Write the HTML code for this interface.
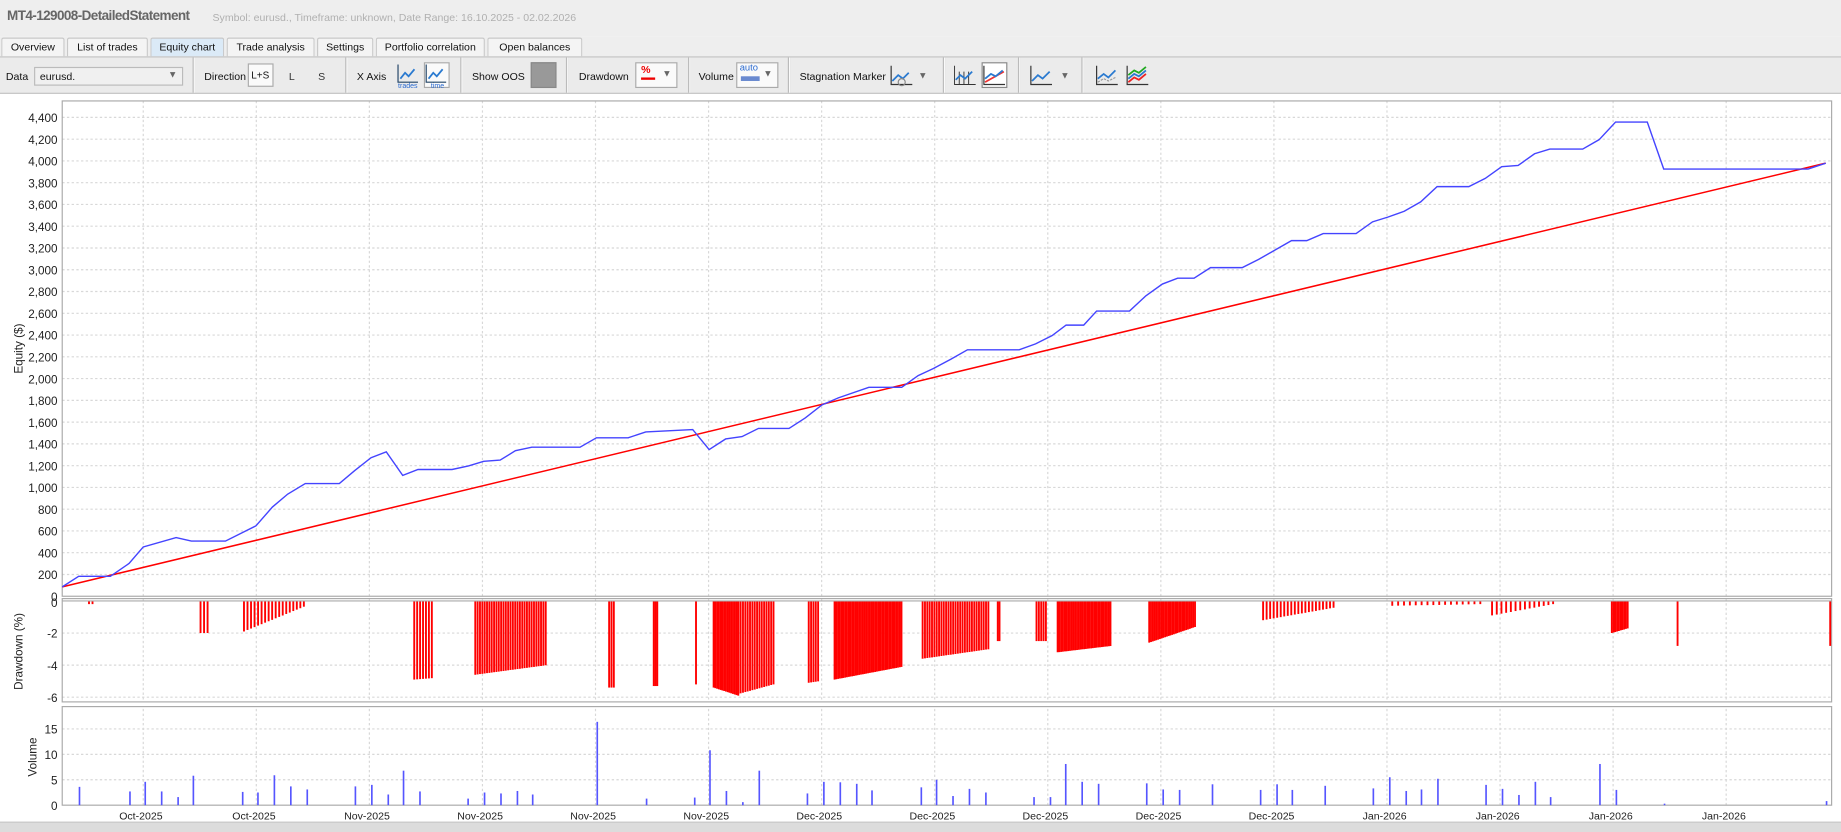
<!DOCTYPE html>
<html><head><meta charset="utf-8">
<style>
html,body{margin:0;padding:0;width:1841px;height:831px;overflow:hidden;background:#fff;font-family:"Liberation Sans",Arial,sans-serif;}
#w{position:absolute;left:0;top:0;width:1568px;height:708px;transform:scale(1.17411,1.17373);transform-origin:0 0;background:#fff;}
.title{position:absolute;left:0;top:0;width:1568px;height:31px;background:#eeeeee;}
.title b{position:absolute;left:6px;top:8px;font-size:11.5px;color:#666;font-weight:bold;letter-spacing:-0.5px}
.title span{position:absolute;left:181px;top:10px;font-size:9px;color:#b0b0b0}
.tabs{position:absolute;left:0;top:31px;width:1568px;height:18px;background:#eeeeee;}
.tab{position:absolute;top:1px;height:16px;border:1px solid #c8c8c8;border-bottom:none;background:#f4f4f4;font-size:9px;line-height:15px;text-align:center;color:#111;box-sizing:border-box;border-radius:2px 2px 0 0}
.tab.act{background:#dbeaf7;}
.tb{position:absolute;left:0;top:48px;width:1568px;height:32px;background:#ebebeb;border-top:1px solid #c4c4c4;border-bottom:1px solid #c4c4c4;box-sizing:border-box;font-size:9px;color:#111}
.tb .t{position:absolute;top:11px}
.sep{position:absolute;top:0;width:1px;height:30px;background:#bbb;border-right:1px solid #fafafa}
.ib{position:absolute;top:5px;height:20px;border:1px solid #aaa;background:#fafafa;box-sizing:border-box}
svg{position:absolute;left:0;top:0}
</style></head><body><div id="w">
<div class="title"><b>MT4-129008-DetailedStatement</b><span>Symbol: eurusd., Timeframe: unknown, Date Range: 16.10.2025 - 02.02.2026</span></div>
<div class="tabs">
<div class="tab" style="left:1px;width:54px">Overview</div>
<div class="tab" style="left:57px;width:69px">List of trades</div>
<div class="tab act" style="left:128px;width:63px">Equity chart</div>
<div class="tab" style="left:193px;width:75px">Trade analysis</div>
<div class="tab" style="left:270px;width:48px">Settings</div>
<div class="tab" style="left:320px;width:93px">Portfolio correlation</div>
<div class="tab" style="left:415px;width:81px">Open balances</div>
</div>
<div class="tb">
<span class="t" style="left:5px">Data</span>
<div class="ib" style="left:29px;width:127px;height:16px;top:8px;background:#f0f0f0;border-color:#bbb"><span style="position:absolute;left:4px;top:2px">eurusd.</span><span style="position:absolute;right:4px;top:1px;font-size:8px;color:#666">▼</span></div>
<div class="sep" style="left:164px"></div>
<span class="t" style="left:174px">Direction</span>
<div class="ib" style="left:211px;width:22px"><span style="position:absolute;left:2px;top:4px;font-size:8.5px">L+S</span></div>
<span class="t" style="left:246px;color:#333">L</span><span class="t" style="left:271px;color:#333">S</span>
<div class="sep" style="left:294px"></div>
<span class="t" style="left:304px">X Axis</span>
<svg style="left:337px;top:5px" width="22" height="22" viewBox="0 0 22 22"><path d="M2 1V16H19" fill="none" stroke="#246" stroke-width="1"/><path d="M4 13l4-5 3 3 5-6" fill="none" stroke="#2a7ad0" stroke-width="1.5"/><text x="2" y="21" font-size="6" fill="#2a6ad0">trades</text></svg>
<div class="ib" style="left:361px;width:22px;height:22px;top:4px"></div>
<svg style="left:361px;top:5px" width="22" height="22" viewBox="0 0 22 22"><path d="M2 1V16H19" fill="none" stroke="#246"/><path d="M4 13l4-5 3 3 5-6" fill="none" stroke="#2a7ad0" stroke-width="1.5"/><text x="6" y="21" font-size="6" fill="#2a6ad0">time</text></svg>
<div class="sep" style="left:392px"></div>
<span class="t" style="left:402px">Show OOS</span>
<div class="ib" style="left:452px;width:22px;height:22px;top:4px;background:#999;border-color:#888"></div>
<div class="sep" style="left:482px"></div>
<span class="t" style="left:493px">Drawdown</span>
<div class="ib" style="left:541px;width:36px;height:22px;top:4px"><span style="position:absolute;left:4px;top:0;color:#e00;font-size:9px;font-weight:bold">%</span><span style="position:absolute;left:4px;top:12px;width:12px;height:2px;background:#e00"></span><span style="position:absolute;right:4px;top:4px;font-size:8px;color:#666">▼</span></div>
<div class="sep" style="left:586px"></div>
<span class="t" style="left:595px">Volume</span>
<div class="ib" style="left:627px;width:36px;height:22px;top:4px"><span style="position:absolute;left:2px;top:-1px;color:#2a6ad0;font-size:8px">auto</span><span style="position:absolute;left:3px;top:11px;width:16px;height:4px;background:#6a8ad0"></span><span style="position:absolute;right:4px;top:4px;font-size:8px;color:#666">▼</span></div>
<div class="sep" style="left:671px"></div>
<span class="t" style="left:681px">Stagnation Marker</span>
<svg style="left:757px;top:6px" width="22" height="20"><path d="M2 1V17H20" fill="none" stroke="#333"/><path d="M3 14l5-5 4 3 5-5" fill="none" stroke="#2a7ad0" stroke-width="1.5"/><circle cx="11" cy="15" r="3" fill="none" stroke="#888"/></svg>
<span class="t" style="left:782px;font-size:8px;color:#666;top:11px">▼</span>
<div class="sep" style="left:803px"></div>
<svg style="left:811px;top:6px" width="22" height="20"><path d="M2 1V17H20M6 6V17M10 6V17M14 6V17" fill="none" stroke="#333" stroke-width="0.8"/><path d="M3 13l4-4 4 3 6-6" fill="none" stroke="#2a7ad0" stroke-width="1.5"/></svg>
<div class="ib" style="left:836px;width:22px;height:22px;top:4px;background:#fff;border-color:#888"></div>
<svg style="left:836px;top:6px" width="22" height="20"><path d="M2 1V17H20" fill="none" stroke="#333"/><path d="M3 15L19 6" stroke="#e33" stroke-width="1.5"/><path d="M3 12l5-4 4 2 6-5" fill="none" stroke="#2a7ad0" stroke-width="1.5"/></svg>
<div class="sep" style="left:867px"></div>
<svg style="left:876px;top:6px" width="22" height="20"><path d="M2 1V17H20" fill="none" stroke="#333"/><path d="M3 14l5-5 4 3 6-6" fill="none" stroke="#2a7ad0" stroke-width="1.5"/></svg>
<span class="t" style="left:903px;font-size:8px;color:#666;top:11px">▼</span>
<div class="sep" style="left:921px"></div>
<svg style="left:932px;top:6px" width="22" height="20"><path d="M2 1V17H20" fill="none" stroke="#333"/><path d="M3 12l5-4 4 3 6-6" fill="none" stroke="#2a7ad0" stroke-width="1.5"/><path d="M3 15l5-3 4 2 6-3" fill="none" stroke="#999" stroke-dasharray="2 1"/></svg>
<svg style="left:958px;top:6px" width="22" height="20"><path d="M2 1V17H20" fill="none" stroke="#333"/><path d="M3 9l5-4 4 2 6-5" fill="none" stroke="#2a2" stroke-width="1.5"/><path d="M3 12l5-4 4 2 6-5" fill="none" stroke="#2a7ad0" stroke-width="1.5"/><path d="M3 15l5-4 4 2 6-5" fill="none" stroke="#e22" stroke-width="1.5"/></svg>
</div>
<svg id="c" width="1568" height="708" style="top:0;left:0;pointer-events:none" font-family="Liberation Sans, Arial, sans-serif"></svg>
<div style="position:absolute;left:0;top:700px;width:1568px;height:8px;background:#dcdcdc;border-top:1px solid #c8c8c8"></div>
</div>
<script>
var s='';var L=53,R=1560;
function ln(x1,y1,x2,y2,c,w,d){s+='<line x1="'+x1+'" y1="'+y1+'" x2="'+x2+'" y2="'+y2+'" stroke="'+c+'" stroke-width="'+(w||1)+'"'+(d?' stroke-dasharray="'+d+'"':'')+'/>';}
function tx(x,y,t,a,extra){s+='<text x="'+x+'" y="'+y+'" font-size="10" fill="#222" text-anchor="'+(a||'end')+'" '+(extra||'')+'>'+t+'</text>';}
var gx=[];for(var i=0;i<15;i++)gx.push(122+i*96.3);
var eY=function(v){return 508-v/200*18.545;};
for(var v=0;v<=4400;v+=200){var y=eY(v);if(v>0)ln(L,y,R,y,'#d8d8d8',1,'2 2');tx(49,y+4,v.toLocaleString('en-US'));}
gx.forEach(function(x){ln(x,86,x,508,'#d8d8d8',1,'2 2');ln(x,510,x,598,'#d8d8d8',1,'2 2');ln(x,604,x,686,'#d8d8d8',1,'2 2');});
s+='<rect x="'+L+'" y="86" width="'+(R-L)+'" height="422" fill="none" stroke="#aaa"/>';
var eq=[[53,500],[67,491],[94,491],[110,480],[122,466],[150,458],[163,461],[192,461],[218,448],[232,432],[245,421],[260,412],[289,412],[302,401],[316,390],[329,385],[343,405],[356,400],[385,400],[399,397],[412,393],[426,392],[439,384],[453,381],[494,381],[508,373],[535,373],[550,368],[590,366],[604,383],[618,374],[632,372],[646,365],[672,365],[686,356],[700,345],[714,339],[740,330],[768,330],[782,320],[795,314],[810,306],[824,298],[868,298],[882,293],[896,286],[908,277],[923,277],[934,265],[962,265],[976,252],[990,242],[1003,237],[1017,237],[1031,228],[1058,228],[1072,221],[1086,213],[1100,205],[1113,205],[1127,199],[1155,199],[1169,189],[1182,185],[1196,180],[1210,172],[1224,159],[1251,159],[1265,152],[1279,142],[1293,141],[1307,131],[1320,127],[1348,127],[1362,119],[1376,104],[1403,104],[1417,144],[1540,144],[1555,139]];
s+='<line x1="53" y1="500" x2="1555" y2="139" stroke="#f00" stroke-width="1.3"/>';
s+='<polyline fill="none" stroke="#4444ff" stroke-width="1.2" points="'+eq.map(function(p){return p.join(',')}).join(' ')+'"/>';
s+='<text transform="translate(19,297) rotate(-90)" font-size="10" fill="#222" text-anchor="middle">Equity ($)</text>';
[-2,-4,-6].forEach(function(v){var y=512+(-v)*13.67;ln(L,y,R,y,'#d8d8d8',1,'2 2');tx(49,y+4,v);});
tx(49,517,0);
s+='<rect x="'+L+'" y="510" width="'+(R-L)+'" height="88" fill="none" stroke="#aaa"/>';
var g=[[170,177,2,2,3],[207,260,1.9,0.3,3],[352,369,4.9,4.8,2.5],[404,465,4.6,4.0,2],[518,522,5.4,5.4,2],[556,560,5.3,5.3,1.5],[592,593,5.2,5.2,2],[607,628,5.4,5.9,1.5],[628,658,5.8,5.2,2],[688,697,5.1,5.0,2],[710,768,4.9,4.1,1.5],[785,842,3.6,3.0,2],[849,851,2.5,2.5,1.5],[882,890,2.5,2.5,2],[900,946,3.2,2.8,1.5],[978,1018,2.6,1.6,1.5],[1075,1137,1.2,0.4,3],[1185,1260,0.3,0.2,5],[1270,1322,0.9,0.2,4],[1372,1386,2.0,1.7,1.5],[1428,1429,2.8,2.8,2],[1558,1559,2.8,2.8,2],[75,80,0.2,0.2,3]];
g.forEach(function(q){for(var x=q[0];x<=q[1];x+=q[4]){var t=(q[1]==q[0])?0:(x-q[0])/(q[1]-q[0]);var d=q[2]+(q[3]-q[2])*t;s+='<rect x="'+x+'" y="512" width="1.6" height="'+(d*13.67).toFixed(1)+'" fill="#f00"/>';}});
ln(L,512,R,512,'#aaa',1);
s+='<text transform="translate(19,555) rotate(-90)" font-size="10" fill="#222" text-anchor="middle">Drawdown (%)</text>';
[0,5,10,15].forEach(function(v){var y=686-v*4.33;if(v>0)ln(L,y,R,y,'#d8d8d8',1,'2 2');tx(49,y+4,v);});
s+='<rect x="'+L+'" y="602" width="'+(R-L)+'" height="84" fill="none" stroke="#aaa"/>';
var vb=[[67,3.6],[110,2.7],[123,4.6],[137,2.7],[151,1.6],[164,5.8],[206,2.6],[219,2.5],[233,5.9],[247,3.7],[261,3.1],[302,3.7],[316,4],[330,2.1],[343,6.8],[357,2.7],[398,1.3],[412,2.5],[426,2.3],[440,2.8],[453,2.1],[508,16.4],[550,1.3],[591,1.5],[604,10.8],[618,2.8],[632,0.6],[646,6.8],[687,2.3],[701,4.6],[715,4.5],[729,4.2],[742,2.9],[784,3.5],[797,5],[811,1.8],[825,3.2],[839,2.5],[880,1.6],[894,1.6],[907,8.1],[921,4.6],[935,4.2],[976,4.3],[990,3.1],[1004,3],[1032,4.1],[1073,3],[1087,4.1],[1100,3],[1128,3.8],[1169,3.3],[1183,5.5],[1197,2.8],[1210,3.1],[1224,5.2],[1265,4],[1279,3.2],[1293,2],[1307,4.6],[1320,1.6],[1362,8.1],[1376,3],[1417,0.3],[1555,0.8]];
vb.forEach(function(b){s+='<rect x="'+b[0]+'" y="'+(686-b[1]*4.33).toFixed(1)+'" width="1.4" height="'+(b[1]*4.33).toFixed(1)+'" fill="#5555ff"/>';});
s+='<text transform="translate(31,645) rotate(-90)" font-size="10" fill="#222" text-anchor="middle">Volume</text>';
var lb=['Oct-2025','Oct-2025','Nov-2025','Nov-2025','Nov-2025','Nov-2025','Dec-2025','Dec-2025','Dec-2025','Dec-2025','Dec-2025','Jan-2026','Jan-2026','Jan-2026','Jan-2026'];
lb.forEach(function(t,i){s+='<text x="'+(gx[i]-2)+'" y="698" font-size="9" fill="#222" text-anchor="middle">'+t+'</text>';});
document.getElementById('c').innerHTML=s;
</script>
</body></html>
